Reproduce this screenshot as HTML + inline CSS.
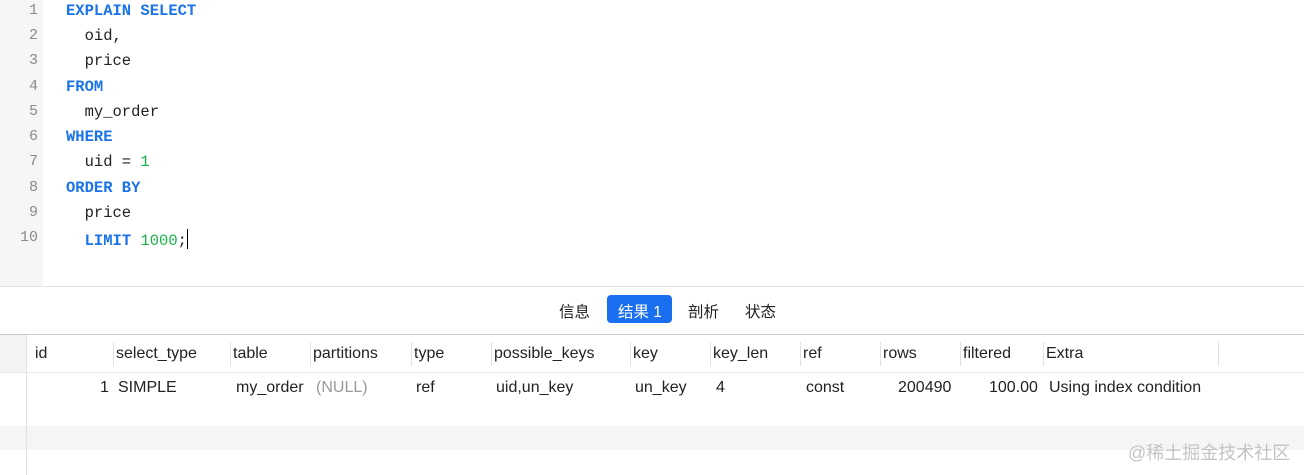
<!DOCTYPE html>
<html><head><meta charset="utf-8"><style>
body{margin:0;width:1304px;height:475px;position:relative;background:#fff;overflow:hidden;font-family:"Liberation Sans","Noto Sans CJK SC",sans-serif}
.gut{position:absolute;left:0;top:0;width:43px;height:286px;background:#f6f6f6}
.ln{position:absolute;left:0;width:38px;text-align:right;color:#8a8a8a;font:15px "Liberation Mono",monospace}
.cd{position:absolute;left:66px;font:15.5px "Liberation Mono",monospace;color:#222;white-space:pre}
.k{color:#1a73e8;font-weight:bold}.n{color:#1ab04a}
.a{position:absolute}
.h{position:absolute;top:345px;font-size:16px;color:#222}
.d{position:absolute;top:379px;font-size:16px;color:#222}
.s{position:absolute;top:342px;width:1px;height:24px;background:#e2e2e2}
</style></head><body>
<div class="gut"></div>
<div class="ln" style="top:2px">1</div><div class="ln" style="top:27px">2</div><div class="ln" style="top:52px">3</div><div class="ln" style="top:78px">4</div><div class="ln" style="top:103px">5</div><div class="ln" style="top:128px">6</div><div class="ln" style="top:153px">7</div><div class="ln" style="top:179px">8</div><div class="ln" style="top:204px">9</div><div class="ln" style="top:229px">10</div>
<div class="cd" style="top:2px"><span class="k">EXPLAIN SELECT</span></div>
<div class="cd" style="top:27px">  oid,</div>
<div class="cd" style="top:52px">  price</div>
<div class="cd" style="top:78px"><span class="k">FROM</span></div>
<div class="cd" style="top:103px">  my_order</div>
<div class="cd" style="top:128px"><span class="k">WHERE</span></div>
<div class="cd" style="top:153px">  uid = <span class="n">1</span></div>
<div class="cd" style="top:179px"><span class="k">ORDER BY</span></div>
<div class="cd" style="top:204px">  price</div>
<div class="cd" style="top:229px">  <span class="k">LIMIT</span> <span class="n">1000</span>;<span style="display:inline-block;width:1.5px;height:20px;background:#000;vertical-align:-4px"></span></div>
<div class="a" style="left:0;top:286px;width:1304px;height:1px;background:#e4e4e4"></div>
<div class="a" style="left:559px;top:300px;font-size:15.5px;color:#222">信息</div>
<div class="a" style="left:607px;top:295px;width:65px;height:28px;background:#1a6ef0;border-radius:4px"></div>
<div class="a" style="left:618px;top:300px;font-size:15.5px;color:#fff">结果 1</div>
<div class="a" style="left:688px;top:300px;font-size:15.5px;color:#222">剖析</div>
<div class="a" style="left:745px;top:300px;font-size:15.5px;color:#222">状态</div>
<div class="a" style="left:0;top:334px;width:1304px;height:1px;background:#c8c8c8"></div>
<div class="a" style="left:0;top:335px;width:26px;height:37px;background:#f4f4f4"></div>
<div class="a" style="left:0;top:372px;width:1304px;height:1px;background:#e6e6e6"></div>
<div class="a" style="left:0;top:426px;width:1304px;height:24px;background:#f5f5f5"></div>
<div class="a" style="left:26px;top:335px;width:1px;height:140px;background:#e2e2e2"></div>
<div class="s" style="left:113px"></div><div class="s" style="left:230px"></div><div class="s" style="left:310px"></div><div class="s" style="left:411px"></div><div class="s" style="left:491px"></div><div class="s" style="left:630px"></div><div class="s" style="left:710px"></div><div class="s" style="left:800px"></div><div class="s" style="left:880px"></div><div class="s" style="left:960px"></div><div class="s" style="left:1043px"></div><div class="s" style="left:1218px"></div>
<div class="h" style="left:35px">id</div><div class="h" style="left:116px">select_type</div><div class="h" style="left:233px">table</div><div class="h" style="left:313px">partitions</div><div class="h" style="left:414px">type</div><div class="h" style="left:494px">possible_keys</div><div class="h" style="left:633px">key</div><div class="h" style="left:713px">key_len</div><div class="h" style="left:803px">ref</div><div class="h" style="left:883px">rows</div><div class="h" style="left:963px">filtered</div><div class="h" style="left:1046px">Extra</div>
<div class="d" style="left:100px">1</div><div class="d" style="left:118px">SIMPLE</div><div class="d" style="left:236px">my_order</div><div class="d" style="left:316px;color:#999">(NULL)</div><div class="d" style="left:416px">ref</div><div class="d" style="left:496px">uid,un_key</div><div class="d" style="left:635px">un_key</div><div class="d" style="left:716px">4</div><div class="d" style="left:806px">const</div><div class="d" style="left:898px">200490</div><div class="d" style="left:989px">100.00</div><div class="d" style="left:1049px">Using index condition</div>
<div class="a" style="left:1128px;top:439px;font-size:18px;color:#c4c4c4">@稀土掘金技术社区</div>
</body></html>
